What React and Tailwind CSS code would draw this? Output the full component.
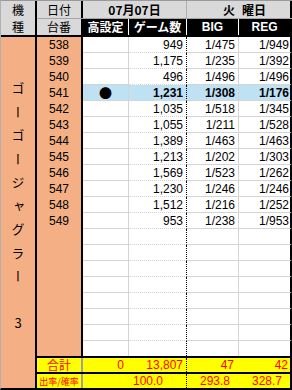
const rows = [
  ['538', '', '949', '1/475', '1/949'],
  ['539', '', '1,175', '1/235', '1/392'],
  ['540', '', '496', '1/496', '1/496'],
  ['541', '●', '1,231', '1/308', '1/176'],
  ['542', '', '1,035', '1/518', '1/345'],
  ['543', '', '1,055', '1/211', '1/528'],
  ['544', '', '1,389', '1/463', '1/463'],
  ['545', '', '1,213', '1/202', '1/303'],
  ['546', '', '1,569', '1/523', '1/262'],
  ['547', '', '1,230', '1/246', '1/246'],
  ['548', '', '1,512', '1/216', '1/252'],
  ['549', '', '953', '1/238', '1/953'],
];

// pad out to 20 rows like the sheet
const allRows = [...rows, ...Array.from({ length: 8 }, (_, i) => ['', '', '', '', ''])];

function DataRow({ row, last }) {
  const hot = row[1] === '●';
  const line = last ? 'h-[15px]' : 'h-[16px] border-b border-b-[#d4d4d4]';
  const bg = hot ? 'bg-[#bfe1f4]' : 'bg-white';
  return (
    <div className="flex">
      <div className={`w-[46px] ${last ? 'h-[15px]' : 'h-[16px]'} bg-[#f4b084] border-r-2 border-r-black flex items-center justify-center`}>
        {row[0]}
      </div>
      <div className={`w-[46px] ${line} ${bg} border-r border-r-[#d4d4d4] flex items-center justify-center text-[13px] font-['Noto_Sans_CJK_JP',sans-serif]`}>
        {row[1]}
      </div>
      <div className={`w-[58px] ${line} ${bg} border-r border-r-black border-dotted flex items-center justify-end pr-[3px] ${hot ? 'font-bold' : ''}`}>
        {row[2]}
      </div>
      <div className={`w-[52px] ${line} ${bg} border-r border-r-[#d4d4d4] flex items-center justify-end pr-[3px] ${hot ? 'font-bold' : ''}`}>
        {row[3]}
      </div>
      <div className={`w-[53px] ${line} ${bg} border-r-2 border-r-black flex items-center justify-end pr-[1px] ${hot ? 'font-bold' : ''}`}>
        {row[4]}
      </div>
    </div>
  );
}

export default function App() {
  return (
    <div className="w-[292px] h-[390px] overflow-hidden bg-white text-black text-[12px] leading-none font-['Liberation_Sans','Noto_Sans_CJK_JP',sans-serif]">
      <div className="flex h-full border-t border-t-[#9a9a9a] border-l border-l-[#b0b0b0] border-b-2 border-b-black">
        {/* 機種 */}
        <div className="w-[36px] shrink-0 flex flex-col border-r-2 border-r-black">
          <div className="h-[36px] bg-[#d9d9d9] border-b-2 border-b-black flex flex-col items-center pt-[3px] gap-[5px] font-['Noto_Sans_CJK_JP',sans-serif]">
            <span>機</span>
            <span>種</span>
          </div>
          <div className="flex-1 bg-[#f4b084] flex justify-center pt-[45px]">
            <span className="[writing-mode:vertical-rl] [text-orientation:upright] tracking-[10.5px] text-[13px] leading-none font-['Noto_Sans_CJK_JP',sans-serif]">
              ゴーゴージャグラー　3
            </span>
          </div>
        </div>

        <div className="w-[255px] flex flex-col">
          {/* header row 1 */}
          <div className="flex h-[18px] bg-[#d9d9d9] border-b border-b-[#a6a6a6] font-['Noto_Sans_CJK_JP',sans-serif]">
            <div className="w-[46px] border-r-2 border-r-black flex items-center justify-center">日付</div>
            <div className="w-[104px] border-r border-r-[#b0b0b0] flex items-center justify-center font-bold">07月07日</div>
            <div className="w-[52px] flex items-center justify-end pr-[4px] font-bold">火</div>
            <div className="w-[53px] border-r-2 border-r-black flex items-center pl-[3px] font-bold">曜日</div>
          </div>
          {/* header row 2 */}
          <div className="flex h-[18px] border-b-2 border-b-black font-['Noto_Sans_CJK_JP',sans-serif]">
            <div className="w-[46px] bg-[#d9d9d9] border-r-2 border-r-black flex items-center justify-center">台番</div>
            <div className="w-[46px] bg-black text-white font-bold border-r border-r-white flex items-center justify-center">高設定</div>
            <div className="w-[58px] bg-black text-white font-bold border-r border-r-white flex items-center justify-center">ゲーム数</div>
            <div className="w-[52px] bg-black text-white font-bold border-r border-r-white flex items-center justify-center font-['Liberation_Sans',sans-serif]">BIG</div>
            <div className="w-[53px] bg-black text-white font-bold border-r-2 border-r-black flex items-center justify-center font-['Liberation_Sans',sans-serif]">REG</div>
          </div>

          {allRows.map((r, i) => (
            <DataRow key={i} row={r} last={i === allRows.length - 1} />
          ))}

          {/* totals */}
          <div className="flex h-[16px] border-t-2 border-t-black bg-[#ffff00] text-[#ff0000]">
            <div className="w-[46px] border-r-2 border-r-[#a0a0a0] flex items-center justify-center font-['Noto_Sans_CJK_JP',sans-serif]">合計</div>
            <div className="w-[46px] border-r border-r-transparent flex items-center justify-end pr-[4px]">0</div>
            <div className="w-[58px] border-r border-r-black border-dotted flex items-center justify-end pr-[3px]">13,807</div>
            <div className="w-[52px] border-r border-r-transparent flex items-center justify-end pr-[4px]">47</div>
            <div className="w-[53px] border-r-2 border-r-black flex items-center justify-end pr-[2px]">42</div>
          </div>
          <div className="flex h-[16px] border-t-2 border-t-black bg-[#ffff00] text-[#ff0000]">
            <div className="w-[46px] border-r-2 border-r-[#a0a0a0] flex items-center justify-center text-[9px] font-['Noto_Sans_CJK_JP',sans-serif]">出率/確率</div>
            <div className="w-[104px] border-r border-r-black border-dotted flex items-center justify-end pr-[23px]">100.0</div>
            <div className="w-[52px] border-r border-r-transparent flex items-center justify-end pr-[8px]">293.8</div>
            <div className="w-[53px] border-r-2 border-r-black flex items-center justify-end pr-[8px]">328.7</div>
          </div>
        </div>
      </div>
    </div>
  );
}
